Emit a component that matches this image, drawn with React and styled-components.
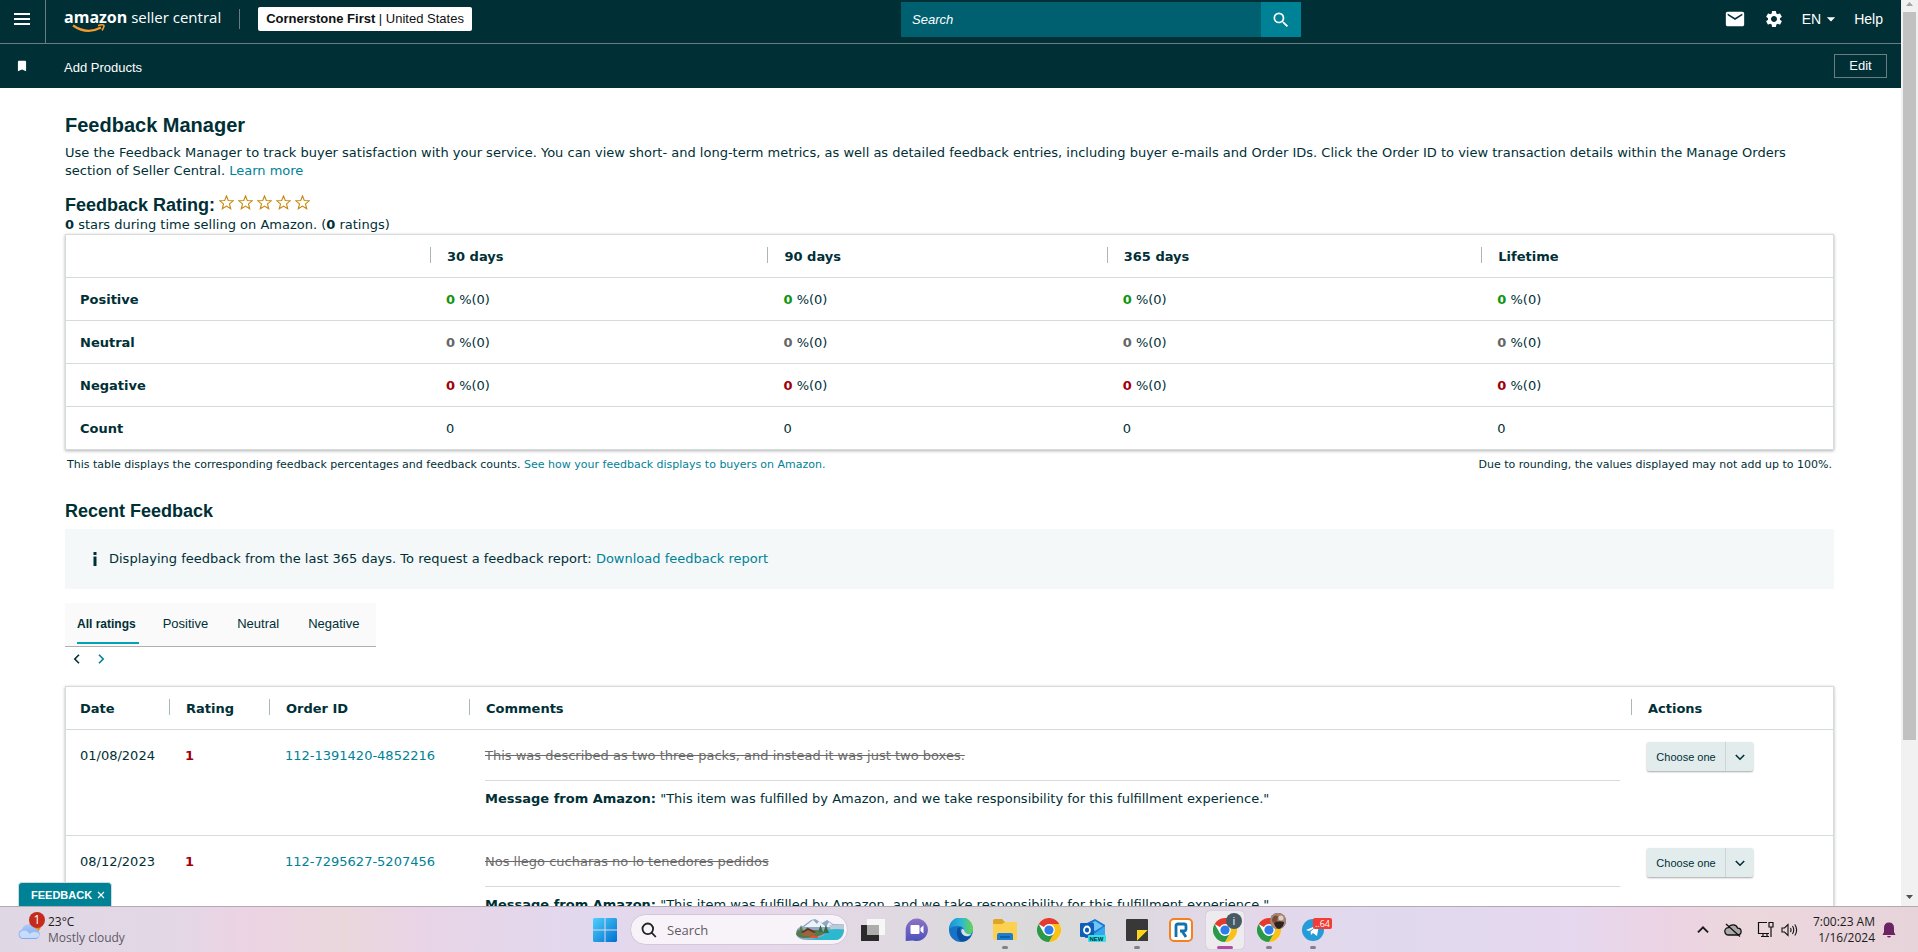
import React from 'react';
import styled, { createGlobalStyle, css } from 'styled-components';
import { MdArrowDropDown, MdBookmark, MdEmail, MdSearch, MdSettings } from 'react-icons/md';

const COLORS = {
    nav: '#002f36',
    navLine: '#6a7c80',
    text: '#002f36',
    link: '#008296',
    border: '#d5dbdb',
    green: '#109510',
    grey: '#666666',
    red: '#a0000c',
}

const SANS = '"Liberation Sans", Arial, sans-serif'
const BODY = '"DejaVu Sans", Verdana, sans-serif'
const SYSTEM = '"Open Sans", "Segoe UI", sans-serif'

const periods = ['30 days', '90 days', '365 days', 'Lifetime']

const summary = [
    { label: 'Positive', color: COLORS.green },
    { label: 'Neutral', color: COLORS.grey },
    { label: 'Negative', color: COLORS.red },
]

const tabs = ['All ratings', 'Positive', 'Neutral', 'Negative']

const feedback = [
    { date: '01/08/2024', order: '112-1391420-4852216', comment: 'This was described as two three packs, and instead it was just two boxes.' },
    { date: '08/12/2023', order: '112-7295627-5207456', comment: 'Nos llego cucharas no lo tenedores pedidos' },
]

const Star = () => (
    <svg width="15" height="15" viewBox="0 0 15 15" fill="none" stroke="#c7870d" strokeWidth="1.1">
        <path d="M7.5 1 L9.3 5.5 L14.2 5.8 L10.5 8.9 L11.7 13.8 L7.5 11.1 L3.3 13.8 L4.5 8.9 L0.8 5.8 L5.7 5.5 Z" />
    </svg>
)

const turns = { down: 0, left: 90, up: 180, right: 270 }

const Chevron = ({ dir = 'down', size = 10 }) => (
    <svg width={size} height={size} viewBox="0 0 10 10" fill="none" stroke="currentColor" strokeWidth="1.6">
        <path d="M0.8 3 L5 7.2 L9.2 3" transform={`rotate(${turns[dir]} 5 5)`} />
    </svg>
)

const ChromeIcon = () => (
    <svg width="24" height="24" viewBox="0 0 24 24">
        <circle cx="12" cy="12" r="12" fill="#fff" />
        <path d="M12 12 L1.6 6 A12 12 0 0 1 22.4 6 Z" fill="#e33b2e" />
        <path d="M12 6 H22.4 A12 12 0 0 1 12 24 L17.2 15 Z" fill="#fbc116" />
        <path d="M1.6 6 L6.8 15 L12 18 L17.2 15 L12 24 A12 12 0 0 1 1.6 6 Z" fill="#2a9a48" />
        <circle cx="12" cy="12" r="5.9" fill="#fff" />
        <circle cx="12" cy="12" r="4.6" fill="#2f7de9" />
    </svg>
)

const Navigation = () => (
    <header>
        <TopBar>
            <NavGroup>
                <MenuButton type="button" aria-label="Menu">
                    <svg width="16" height="12" viewBox="0 0 16 12" fill="#fff">
                        <path d="M0 0 H16 V2 H0 Z M0 5 H16 V7 H0 Z M0 10 H16 V12 H0 Z" />
                    </svg>
                </MenuButton>
                <Logo href="#home">
                    <b>amazon</b> seller central
                    <Smile width="34" height="9" viewBox="0 0 34 9" fill="none" stroke="#f79a2d">
                        <path d="M1 1.5 Q15 11 29 3.5" strokeWidth="2.2" />
                        <path d="M26 1.6 Q31.5 0 32 1.6 Q32 4 30 6.4" strokeWidth="1.7" />
                    </Smile>
                </Logo>
                <Divider />
                <Account type="button"><b>Cornerstone First</b> | United States</Account>
            </NavGroup>
            <Search role="search">
                <input type="text" placeholder="Search" aria-label="Search" />
                <button type="submit" aria-label="Submit search"><MdSearch size={20} /></button>
            </Search>
            <NavTools>
                <a href="#messages" aria-label="Messages"><MdEmail size={22} /></a>
                <a href="#settings" aria-label="Settings"><MdSettings size={20} /></a>
                <button type="button">EN<MdArrowDropDown size={20} /></button>
                <a href="#help">Help</a>
            </NavTools>
        </TopBar>
        <Favourites>
            <BookmarkCell><MdBookmark size={14} /></BookmarkCell>
            <a href="#add-products">Add Products</a>
            <EditButton type="button">Edit</EditButton>
        </Favourites>
    </header>
)

const Summary = () => (
    <Table>
        <colgroup>
            <Col w="20.6%" />
            <Col w="19.1%" />
            <Col w="19.2%" />
            <Col w="21.2%" />
            <col />
        </colgroup>
        <thead>
            <tr>
                <Head><span /></Head>
                {periods.map((el) => <Head key={el} $divided><span>{el}</span></Head>)}
            </tr>
        </thead>
        <tbody>
            {summary.map((row) => (
                <tr key={row.label}>
                    <RowHead scope="row">{row.label}</RowHead>
                    {periods.map((el) => <Cell key={el}><Figure $color={row.color}>0</Figure> %(0)</Cell>)}
                </tr>
            ))}
            <tr>
                <RowHead scope="row">Count</RowHead>
                {periods.map((el) => <Cell key={el}>0</Cell>)}
            </tr>
        </tbody>
    </Table>
)

const Recent = () => (
    <Table>
        <colgroup>
            <Col w="103px" />
            <Col w="100px" />
            <Col w="200px" />
            <col />
            <Col w="202px" />
        </colgroup>
        <thead>
            <tr>
                <Head><span>Date</span></Head>
                {['Rating', 'Order ID', 'Comments', 'Actions'].map((el) => <Head key={el} $divided><span>{el}</span></Head>)}
            </tr>
        </thead>
        <tbody>
            {feedback.map((row) => (
                <tr key={row.order}>
                    <Cell $tall>{row.date}</Cell>
                    <Cell $tall><Figure $color={COLORS.red}>1</Figure></Cell>
                    <Cell $tall><Link href="#order">{row.order}</Link></Cell>
                    <Cell $tall>
                        <Comment>{row.comment}</Comment>
                        <Message><b>Message from Amazon:</b> "This item was fulfilled by Amazon, and we take responsibility for this fulfillment experience."</Message>
                    </Cell>
                    <ActionCell>
                        <SplitButton>
                            <button type="button">Choose one</button>
                            <button type="button" aria-label="More actions"><Chevron /></button>
                        </SplitButton>
                    </ActionCell>
                </tr>
            ))}
        </tbody>
    </Table>
)

const Taskbar = () => (
    <Bar>
        <Weather>
            <WeatherIcon>
                <svg width="25" height="22" viewBox="0 0 25 22">
                    <defs>
                        <linearGradient id="cloud" x1="0" y1="0" x2="0" y2="1">
                            <stop offset="0" stopColor="#a9c9fa" />
                            <stop offset="1" stopColor="#7fa9ef" />
                        </linearGradient>
                    </defs>
                    <circle cx="18" cy="8" r="6" fill="#f28a1c" />
                    <path d="M5.5 21 a5 5 0 0 1 -0.5 -9.6 a7.3 7.3 0 0 1 13.6 -0.4 a5.2 5.2 0 0 1 0.6 10 Z" fill="url(#cloud)" />
                    <path d="M4.5 20 Q0 16 5 13 Q10 11 12.5 16 Q16 12.5 21.5 15 Q24 19 19 20 Z" fill="#dbe8fd" opacity="0.75" />
                </svg>
                <Count>1</Count>
            </WeatherIcon>
            <div>
                <div>23°C</div>
                <Muted>Mostly cloudy</Muted>
            </div>
        </Weather>
        <Apps>
            <AppButton type="button" aria-label="Start">
                <svg width="24" height="24" viewBox="0 0 24 24">
                    <defs>
                        <linearGradient id="win" gradientUnits="userSpaceOnUse" x1="0" y1="0" x2="24" y2="24">
                            <stop offset="0" stopColor="#4fd0fb" />
                            <stop offset="1" stopColor="#0070d0" />
                        </linearGradient>
                    </defs>
                    <path d="M1 0 H11.5 V11.5 H0 V1 Z M12.5 0 H23 L24 1 V11.5 H12.5 Z M0 12.5 H11.5 V24 H1 L0 23 Z M12.5 12.5 H24 V23 L23 24 H12.5 Z" fill="url(#win)" />
                </svg>
            </AppButton>
            <TaskSearch>
                <svg width="16" height="16" viewBox="0 0 16 16" fill="none" stroke="#222" strokeWidth="1.8">
                    <circle cx="6.8" cy="6.8" r="5.3" />
                    <path d="M10.6 10.6 L14.8 15" />
                </svg>
                <input type="text" placeholder="Search" aria-label="Search the computer" />
                <svg width="50" height="23" viewBox="0 0 50 23">
                    <path d="M1 16 Q1 9 8 8 L16 2 L20 1 L27 5 L32 2 L38 6 L49 6 V14 Q47 22 40 22 H12 Q3 22 1 16 Z" fill="#8fa9c4" />
                    <path d="M9 9 L18 2 L22 6 L24 3 L31 9 L34 4 L40 9 Z" fill="#eef3f8" />
                    <path d="M34 7 L49 6 V11 L36 12 Z" fill="#b9cbdb" />
                    <path d="M26 14 Q38 9 49 12 Q47 22 40 22 H11 Q24 20 30 17 Z" fill="#2cb9cf" />
                    <path d="M1 16 L3 11 L4 13 L6 7 L9 15 L12 9 L15 12 L22 12 L30 15 Q24 20 8 20 Q2 19 1 16 Z" fill="#567a4c" />
                    <path d="M7 14 L13 10 L20 13 V18 H8 Z" fill="#9a6540" />
                    <path d="M6 14 L13 10 L21 14 L19 15 L13 12 L8 15 Z" fill="#5b3526" />
                    <path d="M15 18 H23 V20 H15 Z" fill="#e0512f" />
                    <path d="M28 15 L31 7 L34 15 Z M23 14 L25.5 7 L28 14 Z" fill="#3d6b46" />
                </svg>
            </TaskSearch>
            <AppButton type="button" aria-label="Task view">
                <svg width="24" height="24" viewBox="0 0 24 24">
                    <rect x="6" y="1" width="18" height="16" fill="#f7f7f7" />
                    <rect x="0" y="7" width="18" height="16" fill="#2a2a2a" />
                    <rect x="6" y="7" width="12" height="10" fill="#adadad" />
                </svg>
            </AppButton>
            <AppButton type="button" aria-label="Chat">
                <svg width="24" height="24" viewBox="0 0 24 24">
                    <defs>
                        <linearGradient id="chat" x1="0" y1="0" x2="0" y2="1">
                            <stop offset="0" stopColor="#8f72c4" />
                            <stop offset="1" stopColor="#4c53bb" />
                        </linearGradient>
                    </defs>
                    <path d="M12 0.5 a11.3 11.3 0 1 1 -4 22 L0.7 23 V12 A11.3 11.3 0 0 1 12 0.5 Z" fill="url(#chat)" />
                    <rect x="5.5" y="7" width="9" height="9" rx="1" fill="#fff" />
                    <path d="M15.5 10 L18.5 7.5 V15.5 L15.5 13 Z" fill="#fff" />
                </svg>
            </AppButton>
            <AppButton type="button" aria-label="Edge">
                <svg width="24" height="24" viewBox="0 0 24 24">
                    <defs>
                        <linearGradient id="edge" x1="0" y1="0" x2="1" y2="0">
                            <stop offset="0" stopColor="#1c8fd8" />
                            <stop offset="0.5" stopColor="#2cb8d4" />
                            <stop offset="1" stopColor="#68d64e" />
                        </linearGradient>
                    </defs>
                    <circle cx="12" cy="12" r="12" fill="#1574c8" />
                    <path d="M0 11 A12 12 0 0 1 24 11 Q24 17 17 17 Q13 16 15 13 Q15 8 9 8 Q3 8 0 11 Z" fill="url(#edge)" />
                    <path d="M8 13 Q8 9 12 9 Q10 13 13 16 Q17 20 22 18 Q18 25 11 23 Q7 18 8 13 Z" fill="#0c4f9c" />
                    <path d="M15 12 Q16 17 22.5 16 Q19 19.5 15 17.5 Q11.5 15 12.5 11.5 Q14 10.5 15 12 Z" fill="#e0dfe2" />
                </svg>
            </AppButton>
            <AppButton type="button" aria-label="File Explorer" $running>
                <svg width="24" height="24" viewBox="0 0 24 24">
                    <path d="M0 3 Q0 1 2 1 H9 L12 4 H22 Q24 4 24 6 V11 H0 Z" fill="#e0a520" />
                    <path d="M0 6 H9 L12 4 H24 V20 Q24 22 22 22 H2 Q0 22 0 20 Z" fill="#fcd050" />
                    <path d="M4 22 V17 Q4 15 6 15 H18 Q20 15 20 17 V22 Z" fill="#1a7fd0" />
                    <path d="M7 18 H17 V20 H7 Z" fill="#0f5fa8" />
                </svg>
            </AppButton>
            <AppButton type="button" aria-label="Chrome"><ChromeIcon /></AppButton>
            <AppButton type="button" aria-label="Outlook">
                <svg width="26" height="24" viewBox="0 0 26 24">
                    <path d="M5 6 L15 1 L25 7 V20 H5 Z" fill="#1a76d2" />
                    <path d="M8 8 L15 3 L23 8 L15 13 Z" fill="#72c4f5" />
                    <path d="M25 8 V20 H8 Z" fill="#35a7ee" />
                    <rect x="0" y="5" width="14" height="14" rx="1" fill="#0f5fb8" />
                    <ellipse cx="7" cy="12" rx="3" ry="3.5" fill="none" stroke="#fff" strokeWidth="1.8" />
                    <rect x="8" y="17" width="18" height="7" rx="1" fill="#37e0e6" />
                    <text x="9.5" y="23" fontSize="6" fontWeight="bold" fontFamily="Liberation Sans, sans-serif" fill="#062b3a">NEW</text>
                </svg>
            </AppButton>
            <AppButton type="button" aria-label="Sticky Notes" $running>
                <svg width="22" height="22" viewBox="0 0 22 22">
                    <rect width="22" height="22" rx="1" fill="#383838" />
                    <path d="M11 11 H22 L11 22 Z" fill="#fcd41c" />
                    <path d="M22 11 V22 H11 Z" fill="#3c3a33" />
                </svg>
            </AppButton>
            <AppButton type="button" aria-label="RingCentral">
                <svg width="24" height="24" viewBox="0 0 24 24">
                    <rect x="1" y="1" width="22" height="22" rx="4" fill="#fff" stroke="#f58020" strokeWidth="2" />
                    <path d="M7 19 V8 Q7 6 9 6 H15 Q17 6 17 8 V11 Q17 13 14.5 13 H11 M13 13 L17 19" fill="none" stroke="#1272ac" strokeWidth="2.8" />
                </svg>
            </AppButton>
            <AppButton type="button" aria-label="Chrome, work profile" $running $active>
                <ChromeIcon />
                <Profile>i</Profile>
            </AppButton>
            <AppButton type="button" aria-label="Chrome, second profile" $running>
                <ChromeIcon />
                <Profile>
                    <svg width="16" height="16" viewBox="0 0 16 16">
                        <circle cx="8" cy="8" r="8" fill="#a98672" />
                        <path d="M2 7 Q3 1 8 3 L7 9 L3 10 Z" fill="#7a4b35" />
                        <path d="M4 10 Q8 7 14 9 Q14 14 9 16 Q5 15 4 10 Z" fill="#2d2220" />
                        <circle cx="11" cy="5" r="2.5" fill="#e1cfc4" />
                    </svg>
                </Profile>
            </AppButton>
            <AppButton type="button" aria-label="Telegram" $running>
                <svg width="22" height="22" viewBox="0 0 22 22">
                    <circle cx="11" cy="11" r="11" fill="#249cd8" />
                    <path d="M4 11 L17 5.5 L15 17 L11 14 L9 16 L8.5 12.5 L14 8 L7 12 Z" fill="#fff" />
                </svg>
                <Unread>..64</Unread>
            </AppButton>
        </Apps>
        <Tray>
            <Chevron dir="up" size={12} />
            <svg width="18" height="14" viewBox="0 0 18 14" fill="#aaa" stroke="#111" strokeWidth="1.3">
                <path d="M4.5 12 a3.7 3.7 0 0 1 0 -7.4 a5 5 0 0 1 9.2 0.6 a3.4 3.4 0 0 1 0 6.8 Z" />
                <path d="M2 1 L16 13.5" />
            </svg>
            <TrayPair>
                <svg width="17" height="17" viewBox="0 0 17 17" fill="none" stroke="#111" strokeWidth="1.2">
                    <path d="M10 1.5 H1.5 V12.5 H12 M4 15.5 H12 M6 12.5 V15 M10 12.5 V15 M14 6 V16 M12 1.5 H16 V6 H12 Z" />
                </svg>
                <svg width="17" height="14" viewBox="0 0 17 14" fill="none" stroke="#111" strokeWidth="1.1">
                    <path d="M1 5 H3.5 L7 1.5 V12.5 L3.5 9 H1 Z M9.5 5 Q10.6 7 9.5 9 M11.5 3 Q14 7 11.5 11 M13.8 1.5 Q17.5 7 13.8 12.5" />
                </svg>
            </TrayPair>
            <Clock>
                <div>7:00:23 AM</div>
                <div>1/16/2024</div>
            </Clock>
            <svg width="14" height="16" viewBox="0 0 14 16" fill="#6b2462">
                <path d="M7 0.5 Q12 0.5 12 6 V10 L13.5 13 H0.5 L2 10 V6 Q2 0.5 7 0.5 Z M5 14 H9 Q8.5 15.6 7 15.6 Q5.5 15.6 5 14 Z" />
            </svg>
        </Tray>
    </Bar>
)

const App = () => {
    return (
        <Screen>
            <GlobalStyle />
            <Browser>
                <Page>
                    <Navigation />
                    <Content>
                        <Title>Feedback Manager</Title>
                        <Intro>
                            Use the Feedback Manager to track buyer satisfaction with your service. You can view short- and long-term metrics, as well as detailed feedback entries, including buyer e-mails and Order IDs. Click the Order ID to view transaction details within the Manage Orders section of Seller Central. <Link href="#learn-more">Learn more</Link>
                        </Intro>
                        <RatingTitle>
                            Feedback Rating:
                            <Stars>{[1, 2, 3, 4, 5].map((el) => <Star key={el} />)}</Stars>
                        </RatingTitle>
                        <p><b>0</b> stars during time selling on Amazon. (<b>0</b> ratings)</p>
                        <Summary />
                        <Footnote>
                            <span>This table displays the corresponding feedback percentages and feedback counts. <Link href="#display">See how your feedback displays to buyers on Amazon.</Link></span>
                            <span>Due to rounding, the values displayed may not add up to 100%.</span>
                        </Footnote>
                        <Subtitle>Recent Feedback</Subtitle>
                        <Notice>
                            <svg width="4" height="14" viewBox="0 0 4 14" fill={COLORS.text}>
                                <path d="M0.5 0 H3.5 V3 H0.5 Z M0.5 4.5 H3.5 V14 H0.5 Z" />
                            </svg>
                            <span>Displaying feedback from the last 365 days. To request a feedback report: <Link href="#report">Download feedback report</Link></span>
                        </Notice>
                        <Tabs>
                            {tabs.map((el, i) => <Tab key={el} type="button" $selected={i === 0}>{el}</Tab>)}
                        </Tabs>
                        <Pager>
                            <button type="button" aria-label="Previous page"><Chevron dir="left" /></button>
                            <PagerNext type="button" aria-label="Next page"><Chevron dir="right" /></PagerNext>
                        </Pager>
                        <Recent />
                    </Content>
                </Page>
                <Scrollbar>
                    <svg width="17" height="12" viewBox="0 0 17 12" fill="#a3a3a3"><path d="M5 6 L8.5 2 L12 6 Z" /></svg>
                    <Thumb />
                    <svg width="17" height="17" viewBox="0 0 17 17" fill="#505050"><path d="M5 6 H12 L8.5 10 Z" /></svg>
                </Scrollbar>
                <FeedbackTab type="button">
                    FEEDBACK
                    <svg width="8" height="8" viewBox="0 0 8 8" stroke="#fff" strokeWidth="1.1"><path d="M1 1 L7 7 M7 1 L1 7" /></svg>
                </FeedbackTab>
            </Browser>
            <Taskbar />
        </Screen>
    );
}

const GlobalStyle = createGlobalStyle`
    *{
        box-sizing:border-box;
    }
    body{
        margin:0;
    }
    h1,h2,p{
        margin:0;
    }
    button{
        border:0;
        padding:0;
        background:none;
        color:inherit;
        font:inherit;
    }
    svg{
        display:block;
        flex:none;
    }
`

const Screen = styled.div`
    display:flex;
    flex-direction:column;
    height:100vh;
    color:${COLORS.text};
    font-family:${BODY};
    font-size:13px;
    line-height:18px;
`

const Browser = styled.div`
    position:relative;
    display:flex;
    flex:1;
    min-height:0;
    background:#fff;
`

const Page = styled.div`
    flex:1;
    min-width:0;
    overflow:hidden;
`

const TopBar = styled.div`
    display:grid;
    grid-template-columns:1fr 400px 600px;
    height:44px;
    background:${COLORS.nav};
    border-bottom:1px solid ${COLORS.navLine};
    color:#fff;
    font-family:${SANS};
`

const NavGroup = styled.div`
    display:flex;
    align-items:center;
    padding-bottom:5px;
`

const MenuButton = styled.button`
    display:grid;
    place-content:center;
    width:46px;
    height:43px;
    margin-bottom:-5px;
    padding:0 6px 6px 4px;
    border-right:1px solid ${COLORS.navLine};
`

const Logo = styled.a`
    position:relative;
    margin-left:18px;
    padding-bottom:4px;
    color:#fff;
    font-family:${SYSTEM};
    font-size:15px;
    text-decoration:none;
    white-space:nowrap;

    b{
        font-size:16px;
    }
`

const Smile = styled.svg`
    position:absolute;
    left:8px;
    top:16px;
`

const Divider = styled.span`
    height:20px;
    margin:0 18px;
    border-left:1px solid ${COLORS.navLine};
`

const Account = styled.button`
    height:24px;
    padding:0 8px;
    border-radius:2px;
    background:#fff;
    color:#0f1111;
    white-space:nowrap;
`

const Search = styled.form`
    display:flex;
    height:35px;
    margin-top:2px;

    input{
        flex:1;
        min-width:0;
        padding:0 11px;
        border:0;
        background:#00606f;
        color:#fff;
        font:italic 13px ${SANS};
    }
    input::placeholder{
        color:#fff;
        opacity:1;
    }
    button{
        display:grid;
        place-content:center;
        width:40px;
        background:${COLORS.link};
        color:#fff;
    }
`

const NavTools = styled.div`
    display:flex;
    align-items:center;
    justify-content:flex-end;
    gap:18px;
    padding:0 18px 5px 0;
    font-size:14px;

    a{
        color:#fff;
        text-decoration:none;
    }
    button{
        display:flex;
        align-items:center;
        margin-right:-5px;
    }
`

const Favourites = styled.div`
    display:flex;
    align-items:center;
    height:44px;
    padding-right:14px;
    background:${COLORS.nav};
    color:#fff;
    font-family:${SANS};

    a{
        flex:1;
        padding-top:3px;
        color:#fff;
        text-decoration:none;
    }
`

const BookmarkCell = styled.span`
    width:64px;
    padding-left:15px;
`

const EditButton = styled.button`
    width:53px;
    height:24px;
    border:1px solid ${COLORS.navLine};
`

const Content = styled.main`
    padding:25px 67px 0 65px;
`

const Title = styled.h1`
    margin-bottom:7px;
    font:bold 20px/24px ${SANS};
`

const Subtitle = styled.h2`
    font:bold 18px/22px ${SANS};
`

const Intro = styled.p`
    margin-bottom:14px;
`

const RatingTitle = styled(Subtitle)`
    display:flex;
    align-items:center;
    gap:4px;
`

const Stars = styled.span`
    display:flex;
    gap:4px;
    padding-bottom:6px;
`

const Link = styled.a`
    color:${COLORS.link};
    text-decoration:none;
`

const Table = styled.table`
    width:100%;
    table-layout:fixed;
    border:1px solid ${COLORS.border};
    border-collapse:separate;
    border-spacing:0;
    box-shadow:0 1px 3px rgba(0, 0, 0, 0.3);

    tbody tr:last-child > *{
        border-bottom:0;
    }
`

const Col = styled.col`
    width:${(props) => props.w};
`

const cell = css`
    padding:13px 11px 11px 16px;
    border-bottom:1px solid ${COLORS.border};
    text-align:left;
    vertical-align:top;

    &:first-child{
        padding-left:14px;
    }
`

const Head = styled.th`
    ${cell}
    padding:12px 0 14px 0;

    span{
        display:block;
        height:16px;
        line-height:20px;
    }
    ${
        (props) => props.$divided && css`
            span{
                padding-left:16px;
                border-left:1px solid #aab7b8;
            }
        `
    }
`

const RowHead = styled.th`
    ${cell}
`

const Cell = styled.td`
    ${cell}
    ${
        (props) => props.$tall && css`
            padding-top:17px;
            padding-bottom:27px;
        `
    }
`

const ActionCell = styled.td`
    ${cell}
    padding-top:12px;
`

const Figure = styled.b`
    color:${(props) => props.$color};
`

const Footnote = styled.div`
    display:flex;
    justify-content:space-between;
    margin:8px 2px 28px;
    font-size:11px;
    line-height:14px;
`

const Notice = styled.div`
    display:flex;
    align-items:center;
    gap:12px;
    margin:7px 0 14px;
    padding:21px 28px;
    background:#f4f8f9;
`

const Tabs = styled.div`
    display:flex;
    gap:24px;
    width:fit-content;
    padding:0 12px 2px;
    background:#fafafa;
    border-bottom:1px solid #b0b0b0;
`

const Tab = styled.button`
    padding:12px 5px 9px 0;
    border-bottom:2px solid transparent;
    font:13px/18px ${SANS};
    ${
        (props) => props.$selected && css`
            padding-right:3px;
            border-color:#00a4b4;
            font-size:12px;
            font-weight:bold;
        `
    }
`

const Pager = styled.div`
    display:flex;
    gap:14px;
    padding:7px 7px 22px;
`

const PagerNext = styled.button`
    color:${COLORS.link};
`

const Comment = styled.p`
    padding-bottom:15px;
    border-bottom:1px solid ${COLORS.border};
    color:#6b6b6b;
    text-decoration:line-through;
`

const Message = styled.p`
    padding-top:9px;
`

const SplitButton = styled.div`
    display:inline-flex;
    height:29px;
    border-radius:2px;
    background:#e3eced;
    box-shadow:0 1px 2px rgba(0, 0, 0, 0.35);
    font-family:${SANS};
    font-size:11px;

    button{
        display:grid;
        place-content:center;
        width:78px;
    }
    button + button{
        width:28px;
        border-left:1px solid #cbd5d7;
    }
`

const Scrollbar = styled.div`
    display:flex;
    flex-direction:column;
    width:17px;
    background:#f1f1f1;
`

const Thumb = styled.div`
    height:728px;
    margin:0 2px auto;
    background:#c1c1c1;
`

const FeedbackTab = styled.button`
    position:absolute;
    left:18px;
    bottom:0;
    display:flex;
    align-items:center;
    gap:5px;
    height:24px;
    padding:0 6px 0 12px;
    border:1px solid #cfdcde;
    border-bottom:0;
    border-radius:4px 4px 0 0;
    background:${COLORS.link};
    color:#fff;
    font:bold 11px ${SANS};
`

const Bar = styled.footer`
    display:grid;
    grid-template-columns:1fr auto 1fr;
    align-items:center;
    height:46px;
    border-top:1px solid #b3a9b5;
    background:linear-gradient(90deg, #dfd8e4 0%, #e3d7e6 9%, #ecd3e3 13%, #ead7dc 18%, #e8d4e6 22%, #e2d8ee 30%, #e7d7ea 40%, #dcdadd 50%, #dadada 56%, #e3d8ea 65%, #e0d9ee 73%, #e6d8ee 82%, #ecd3e3 87%, #ebd7dc 91%, #e7d3da 100%);
    color:#1b1b1b;
    font-family:${SYSTEM};
    font-size:12px;
    line-height:16px;
`

const Weather = styled.div`
    display:flex;
    align-items:center;
    gap:6px;
    padding-left:17px;
`

const WeatherIcon = styled.div`
    position:relative;
    padding-bottom:2px;
`

const Count = styled.span`
    position:absolute;
    top:-6px;
    right:-3px;
    width:16px;
    border-radius:8px;
    background:#c42b1c;
    color:#fff;
    text-align:center;
`

const Muted = styled.div`
    color:#5f5866;
`

const Apps = styled.div`
    display:flex;
    align-items:center;
    gap:6px;
`

const AppButton = styled.button`
    position:relative;
    display:grid;
    place-content:center;
    width:38px;
    height:38px;
    border-radius:4px;
    ${
        (props) => props.$running && css`
            &::after{
                content:"";
                position:absolute;
                left:16px;
                bottom:0;
                width:6px;
                height:3px;
                border-radius:2px;
                background:#858088;
            }
        `
    }
    ${
        (props) => props.$active && css`
            background:#eeebee;
            box-shadow:0 0 1px rgba(0, 0, 0, 0.3);

            &::after{
                left:11px;
                width:16px;
                background:#b04fa0;
            }
        `
    }
`

const TaskSearch = styled.label`
    display:flex;
    align-items:center;
    width:218px;
    height:31px;
    padding:0 2px 0 10px;
    border:1px solid #d3c9d6;
    border-radius:16px;
    background:#f7f3f9;

    input{
        flex:1;
        min-width:0;
        padding:0 10px;
        border:0;
        background:none;
        font:13px ${SYSTEM};
    }
    input::placeholder{
        color:#605c62;
        opacity:1;
    }
`

const Profile = styled.span`
    position:absolute;
    top:2px;
    right:2px;
    width:16px;
    height:16px;
    border-radius:8px;
    background:#455a64;
    color:#fff;
    font-size:11px;
    text-align:center;
`

const Unread = styled.span`
    position:absolute;
    top:7px;
    left:19px;
    padding:0 2px;
    border-radius:2px;
    background:#f23c34;
    color:#fff;
    font-size:9px;
    line-height:11px;
`

const Tray = styled.div`
    display:flex;
    align-items:center;
    justify-content:flex-end;
    gap:15px;
    padding-right:22px;

    > svg:last-child{
        margin-left:-8px;
    }
`

const TrayPair = styled.div`
    display:flex;
    align-items:center;
    gap:7px;
`

const Clock = styled.div`
    text-align:right;
`

export default App;
